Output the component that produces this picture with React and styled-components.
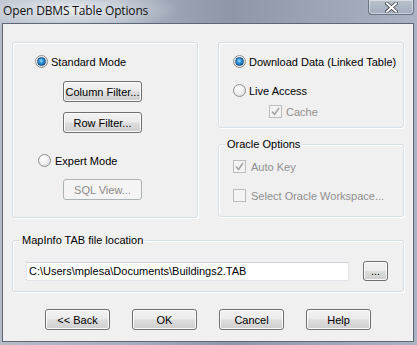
import styled, { createGlobalStyle } from "styled-components";

const GlobalStyle = createGlobalStyle`
  html, body {
    margin: 0;
    padding: 0;
    background: #ffffff;
  }
  * {
    box-sizing: border-box;
  }
`;

const Window = styled.div`
  width: 417px;
  height: 345px;
  display: flex;
  flex-direction: column;
  padding: 0 3px 3px 2px;
  background:
    radial-gradient(ellipse 110px 22px at 70px 10px, rgba(236, 239, 243, 0.95), rgba(236, 239, 243, 0) 100%),
    linear-gradient(90deg, #b4bcc8 0%, #a7b0be 30%, #8d97a8 55%, #9aa4b4 75%, #aab3c1 100%);
  font-family: "Liberation Sans", Arial, sans-serif;
  font-size: 11px;
  color: #000;
`;

const TitleBar = styled.div`
  height: 23px;
  display: flex;
  align-items: flex-start;
  justify-content: space-between;
`;

const Title = styled.div`
  padding: 3px 0 0 1px;
  font-family: "Open Sans", "Noto Sans", sans-serif;
  font-size: 12px;
  line-height: 15px;
  color: #101010;
  letter-spacing: -0.15px;
`;

const CloseButton = styled.div`
  width: 46px;
  height: 15px;
  display: flex;
  align-items: center;
  justify-content: center;
  border: 1px solid #6a7384;
  border-top: none;
  border-radius: 0 0 4px 4px;
  background: linear-gradient(#b9c1cd, #a3acbb);
  box-shadow: inset 0 0 0 1px rgba(255, 255, 255, 0.45);
`;

const Client = styled.div`
  flex: 1;
  display: flex;
  flex-direction: column;
  border: 1px solid #5d6778;
  background: #f0f0f0;
  padding: 18px 9px 11px;
`;

const TopGrid = styled.div`
  display: grid;
  grid-template-columns: 186px 186px;
  column-gap: 20px;
  height: 176px;
`;

const Column = styled.div`
  display: flex;
  flex-direction: column;
  gap: 16px;
`;

const Group = styled.div`
  position: relative;
  display: flex;
  flex-direction: column;
  align-items: flex-start;
  height: ${(p) => p.$height || "auto"};
  margin-top: ${(p) => p.$top || 0}px;
  border: 1px solid #d5dfe5;
  border-radius: 3px;
  box-shadow: inset 1px 1px 0 #ffffff, 1px 1px 0 #ffffff;
`;

const Legend = styled.span`
  position: absolute;
  top: -8px;
  left: ${(p) => p.$left || 6}px;
  padding: 0 2px;
  background: #f0f0f0;
  line-height: 14px;
`;

const Option = styled.label`
  display: flex;
  align-items: center;
  height: 13px;
  margin-top: ${(p) => p.$top || 0}px;
  margin-left: ${(p) => p.$left || 0}px;
  gap: ${(p) => p.$gap || 4}px;
  color: ${(p) => (p.$disabled ? "#8f8f8f" : "#000")};
  white-space: nowrap;
`;

const RadioCircle = styled.span`
  width: 13px;
  height: 13px;
  flex: none;
  border-radius: 50%;
  border: 1px solid #8e8f8f;
  background: radial-gradient(circle at 40% 35%, #ffffff 0%, #f2f2f2 40%, #d4d4d4 100%);
  display: flex;
  align-items: center;
  justify-content: center;
  &::after {
    content: "";
    display: ${(p) => (p.$checked ? "block" : "none")};
    width: 7px;
    height: 7px;
    border-radius: 50%;
    border: 1px solid #1c4f7e;
    background: radial-gradient(circle at 45% 40%, #8fdcff 0%, #2a8ed6 45%, #0d4f9a 100%);
  }
`;

const CheckBox = styled.span`
  width: 13px;
  height: 13px;
  flex: none;
  border: 1px solid ${(p) => (p.$disabled ? "#bcbcbc" : "#8e8f8f")};
  background: ${(p) => (p.$disabled ? "#f4f4f4" : "linear-gradient(135deg, #dcdcdc, #ffffff)")};
  display: flex;
  align-items: center;
  justify-content: center;
`;

const Button = styled.button`
  width: ${(p) => p.$width || 65}px;
  height: ${(p) => p.$height || 21}px;
  margin-top: ${(p) => p.$top || 0}px;
  margin-left: ${(p) => p.$left || 0}px;
  padding: 0;
  border-radius: 3px;
  font-family: "Liberation Sans", Arial, sans-serif;
  font-size: 11px;
  border: 1px solid ${(p) => (p.disabled ? "#adb2b5" : "#707070")};
  color: ${(p) => (p.disabled ? "#8a8a8a" : "#000")};
  background: ${(p) =>
    p.disabled
      ? "#f4f4f4"
      : "linear-gradient(#f2f2f2 0%, #ebebeb 48%, #dddddd 52%, #cfcfcf 100%)"};
  box-shadow: inset 0 0 0 1px ${(p) => (p.disabled ? "#f4f4f4" : "#fbfbfb")};
  flex: none;
`;

const FileRow = styled.div`
  display: flex;
  align-items: center;
  margin-top: 20px;
  margin-left: 13px;
  gap: 14px;
`;

const TextInput = styled.input`
  width: 323px;
  height: 19px;
  padding: 0 2px;
  border: 1px solid #e2e6ea;
  border-top-color: #cfd4da;
  background: #ffffff;
  font-family: "Liberation Sans", Arial, sans-serif;
  font-size: 11px;
  color: #000;
  outline: none;
`;

const ButtonRow = styled.div`
  display: flex;
  justify-content: center;
  gap: 22px;
  margin-top: 17px;
`;

const Check = ({ disabled }) => (
  <svg width="9" height="9" viewBox="0 0 9 9">
    <path
      d="M1 4.5 L3.5 7.5 L8 1"
      fill="none"
      stroke={disabled ? "#a3a3a3" : "#4a5f97"}
      strokeWidth="1.6"
    />
  </svg>
);

const Radio = ({ checked, label, ...rest }) => (
  <Option {...rest}>
    <RadioCircle $checked={checked} />
    {label}
  </Option>
);

const CheckOption = ({ checked, disabled, label, ...rest }) => (
  <Option $disabled={disabled} {...rest}>
    <CheckBox $disabled={disabled}>{checked && <Check disabled={disabled} />}</CheckBox>
    {label}
  </Option>
);

const CloseGlyph = () => (
  <svg width="13" height="11" viewBox="0 0 13 11">
    <path
      d="M2 1.5 L11 9.5 M11 1.5 L2 9.5"
      stroke="#3d4350"
      strokeWidth="3.6"
      strokeLinecap="square"
    />
    <path
      d="M2 1.5 L11 9.5 M11 1.5 L2 9.5"
      stroke="#ffffff"
      strokeWidth="2"
      strokeLinecap="square"
    />
  </svg>
);

export default function App() {
  return (
    <>
      <GlobalStyle />
      <Window>
        <TitleBar>
          <Title>Open DBMS Table Options</Title>
          <CloseButton>
            <CloseGlyph />
          </CloseButton>
        </TitleBar>
        <Client>
          <TopGrid>
            <Group>
              <Radio checked label="Standard Mode" $top={12} $left={22} $gap={3} />
              <Button $width={79} $top={13} $left={50}>
                Column Filter...
              </Button>
              <Button $width={79} $top={10} $left={50}>
                Row Filter...
              </Button>
              <Radio label="Expert Mode" $top={21} $left={25} $gap={4} />
              <Button $width={79} $top={12} $left={50} disabled>
                SQL View...
              </Button>
            </Group>
            <Column>
              <Group $height="86px">
                <Radio checked label="Download Data (Linked Table)" $top={12} $left={14} $gap={3} />
                <Radio label="Live Access" $top={16} $left={14} $gap={3} />
                <CheckOption checked disabled label="Cache" $top={8} $left={50} $gap={4} />
              </Group>
              <Group $height="73px">
                <Legend>Oracle Options</Legend>
                <CheckOption checked disabled label="Auto Key" $top={15} $left={14} $gap={5} />
                <CheckOption disabled label="Select Oracle Workspace..." $top={16} $left={14} $gap={5} />
              </Group>
            </Column>
          </TopGrid>
          <Group $height="52px" $top={22}>
            <Legend $left={7}>MapInfo TAB file location</Legend>
            <FileRow>
              <TextInput defaultValue="C:\Users\mplesa\Documents\Buildings2.TAB" />
              <Button $width={25} $height={20}>
                ...
              </Button>
            </FileRow>
          </Group>
          <ButtonRow>
            <Button>&lt;&lt; Back</Button>
            <Button>OK</Button>
            <Button>Cancel</Button>
            <Button>Help</Button>
          </ButtonRow>
        </Client>
      </Window>
    </>
  );
}
